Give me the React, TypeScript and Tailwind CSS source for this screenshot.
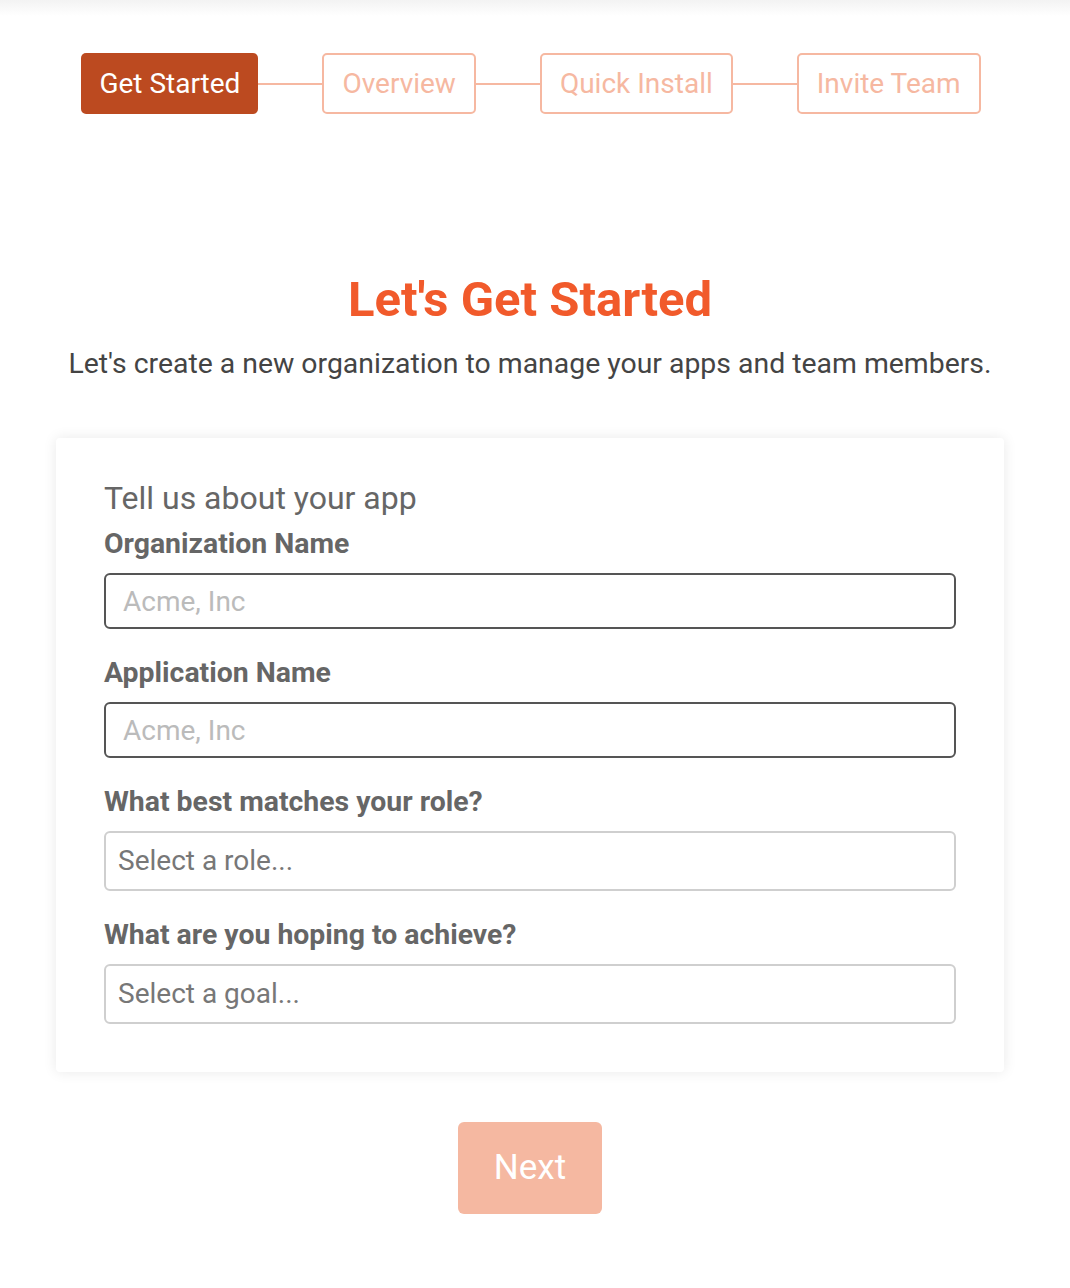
import React from "react";

const steps = ["Get Started", "Overview", "Quick Install", "Invite Team"];

function Stepper() {
  return (
    <div className="flex items-center justify-center pl-[2px]">
      {steps.map((s, i) => (
        <React.Fragment key={s}>
          {i > 0 && <div className="h-[2px] w-[64px] bg-[#f6b8a1]" />}
          <div
            className={`flex h-[61px] items-center rounded-[5px] px-[18px] text-[28px] ${
              i === 0 ? "bg-[#bc4a20] text-white" : "border-2 border-[#f6b8a1] text-[#f6b8a1]"
            }`}
          >
            {s}
          </div>
        </React.Fragment>
      ))}
    </div>
  );
}

function TextField({ label, placeholder }: { label: string; placeholder: string }) {
  return (
    <div className="flex flex-col">
      <label className="text-[28.4px] font-bold leading-[34px] text-[#666]">{label}</label>
      <input
        type="text"
        placeholder={placeholder}
        className="mt-[12px] h-[56px] w-full rounded-[6px] border-2 border-[#555] px-[17px] text-[28px] text-[#333] placeholder:text-[#bbb] focus:outline-none"
      />
    </div>
  );
}

function SelectField({ label, placeholder }: { label: string; placeholder: string }) {
  return (
    <div className="flex flex-col">
      <label className="text-[28.4px] font-bold leading-[34px] text-[#666]">{label}</label>
      <div className="mt-[12px] flex h-[60px] w-full items-center rounded-[6px] border-2 border-[#cfcfcf] px-[12px] text-[28px] text-[#777]">
        {placeholder}
      </div>
    </div>
  );
}

export default function App() {
  return (
    <div className="min-h-screen bg-white font-['Roboto',sans-serif]">
      {/* header shadow */}
      <div className="h-[16px] bg-gradient-to-b from-[#f3f3f3] to-white" />

      <div className="w-[1060px]">
        <div className="pt-[37px]">
          <Stepper />
        </div>

        <div className="mt-[156px] flex flex-col items-center">
          <h1 className="text-[49px] font-bold leading-[60px] text-[#f15a2b]">Let's Get Started</h1>
          <p className="mt-[16px] text-[28.4px] leading-[36px] text-[#444]">
            Let's create a new organization to manage your apps and team members.
          </p>
        </div>

        <div className="mx-[56px] mt-[56px] rounded-[4px] bg-white px-[48px] pb-[48px] pt-[40px] shadow-[0_0_14px_rgba(0,0,0,0.09)]">
          <h2 className="text-[32px] leading-[40px] text-[#666]">Tell us about your app</h2>
          <div className="mt-[9px] flex flex-col gap-[27px]">
            <TextField label="Organization Name" placeholder="Acme, Inc" />
            <TextField label="Application Name" placeholder="Acme, Inc" />
            <SelectField label="What best matches your role?" placeholder="Select a role..." />
            <SelectField label="What are you hoping to achieve?" placeholder="Select a goal..." />
          </div>
        </div>

        <div className="mt-[50px] flex justify-center pb-[70px]">
          <button className="h-[92px] w-[144px] rounded-[6px] bg-[#f5b8a1] text-[35px] text-white">Next</button>
        </div>
      </div>
    </div>
  );
}
